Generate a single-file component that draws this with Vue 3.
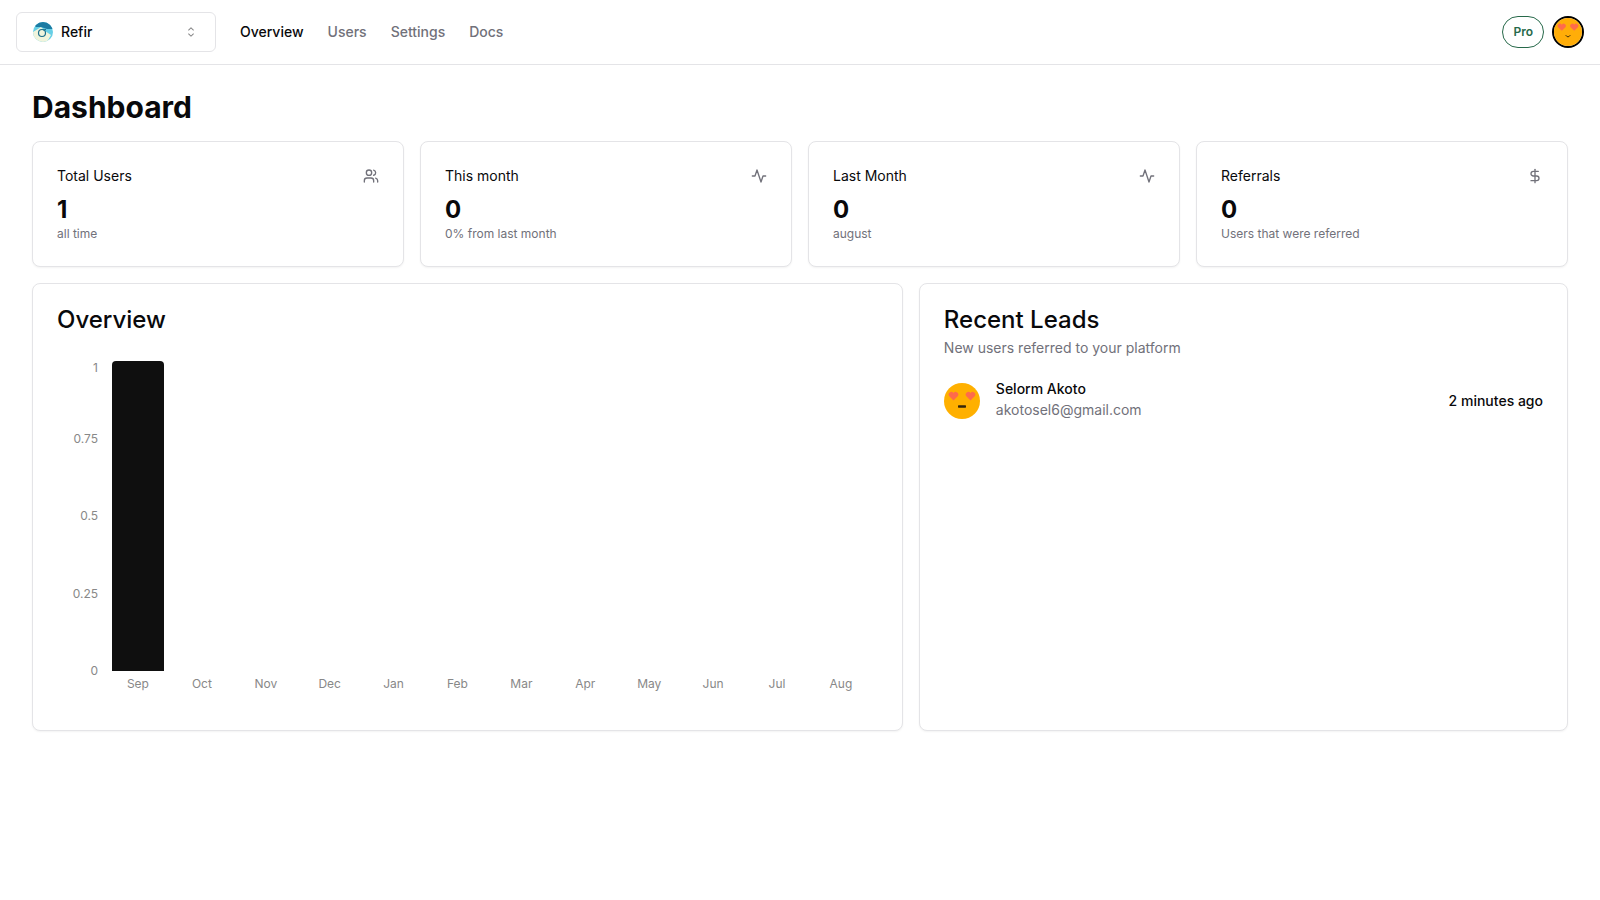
<script setup>
const links = [
  { label: 'Overview', active: true },
  { label: 'Users', active: false },
  { label: 'Settings', active: false },
  { label: 'Docs', active: false },
]

const stats = [
  { title: 'Total Users', value: '1', note: 'all time', icon: 'users' },
  { title: 'This month', value: '0', note: '0% from last month', icon: 'activity' },
  { title: 'Last Month', value: '0', note: 'august', icon: 'activity' },
  { title: 'Referrals', value: '0', note: 'Users that were referred', icon: 'dollar' },
]

const icons = {
  users: [
    'M16 21v-2a4 4 0 0 0-4-4H6a4 4 0 0 0-4 4v2',
    'M9 3a4 4 0 1 0 0 8a4 4 0 1 0 0-8',
    'M22 21v-2a4 4 0 0 0-3-3.87',
    'M16 3.13a4 4 0 0 1 0 7.75',
  ],
  activity: ['M22 12h-4l-3 9L9 3l-3 9H2'],
  dollar: ['M12 2v20', 'M17 5H9.5a3.5 3.5 0 0 0 0 7h5a3.5 3.5 0 0 1 0 7H6'],
}

const ticks = ['1', '0.75', '0.5', '0.25', '0']
const months = [
  { name: 'Sep', total: 1 },
  { name: 'Oct', total: 0 },
  { name: 'Nov', total: 0 },
  { name: 'Dec', total: 0 },
  { name: 'Jan', total: 0 },
  { name: 'Feb', total: 0 },
  { name: 'Mar', total: 0 },
  { name: 'Apr', total: 0 },
  { name: 'May', total: 0 },
  { name: 'Jun', total: 0 },
  { name: 'Jul', total: 0 },
  { name: 'Aug', total: 0 },
]
</script>

<template>
  <div class="page">
    <header class="topbar">
      <button class="switcher" type="button" aria-label="Select a project">
        <svg class="logo" viewBox="0 0 20 20" aria-hidden="true">
          <defs>
            <clipPath id="logo-clip"><circle cx="10" cy="10" r="10" /></clipPath>
          </defs>
          <g clip-path="url(#logo-clip)">
            <rect width="20" height="20" fill="#67cfe6" />
            <path d="M0 10L5 7L8 5L12 9L18 13L14 20H0Z" fill="#f0f4dc" />
            <path d="M2 4V0H20V7L14 7L8 5L3 5Z" fill="#1c7ba3" />
          </g>
          <circle cx="9" cy="11" r="3.5" fill="none" stroke="#1c6f8c" stroke-width="1.2" />
          <path d="M10 8L13 7.5" fill="none" stroke="#1c6f8c" />
        </svg>
        <span class="switcher-name">Refir</span>
        <svg class="caret" viewBox="0 0 15 15" aria-hidden="true">
          <path
            d="M4.93179 5.43179C4.75605 5.60753 4.75605 5.89245 4.93179 6.06819C5.10753 6.24392 5.39245 6.24392 5.56819 6.06819L7.49999 4.13638L9.43179 6.06819C9.60753 6.24392 9.89245 6.24392 10.0682 6.06819C10.2439 5.89245 10.2439 5.60753 10.0682 5.43179L7.81819 3.18179C7.73379 3.0974 7.61933 3.04999 7.49999 3.04999C7.38064 3.04999 7.26618 3.0974 7.18179 3.18179L4.93179 5.43179ZM10.0682 9.56819C10.2439 9.39245 10.2439 9.10753 10.0682 8.93179C9.89245 8.75606 9.60753 8.75606 9.43179 8.93179L7.49999 10.8636L5.56819 8.93179C5.39245 8.75606 5.10753 8.75606 4.93179 8.93179C4.75605 9.10753 4.75605 9.39245 4.93179 9.56819L7.18179 11.8182C7.35753 11.9939 7.64245 11.9939 7.81819 11.8182L10.0682 9.56819Z"
            fill="currentColor"
          />
        </svg>
      </button>
      <nav class="nav">
        <a v-for="l in links" :key="l.label" href="#" :class="{ active: l.active }">{{ l.label }}</a>
      </nav>
      <div class="account">
        <span class="plan">Pro</span>
        <button class="profile" type="button" aria-label="Account menu">
          <svg viewBox="0 0 36 36" aria-hidden="true">
            <rect width="36" height="36" fill="#ffad08" />
            <path d="M10 16.5L5 11.5A2.8 2.8 0 0 1 10 8.8A2.8 2.8 0 0 1 15 11.5Z" fill="#ff6b4a" />
            <path d="M26 16.5L21 11.5A2.8 2.8 0 0 1 26 8.8A2.8 2.8 0 0 1 31 11.5Z" fill="#ff6b4a" />
            <path d="M15 22Q18 26.5 21 22" fill="none" stroke="#3a2a08" stroke-width="1.2" />
          </svg>
        </button>
      </div>
    </header>

    <main class="content">
      <h1>Dashboard</h1>

      <section class="stats">
        <article v-for="s in stats" :key="s.title" class="card stat">
          <div class="stat-head">
            <h2>{{ s.title }}</h2>
            <svg class="icon" viewBox="0 0 24 24" aria-hidden="true">
              <path v-for="d in icons[s.icon]" :key="d" :d="d" />
            </svg>
          </div>
          <div class="value">{{ s.value }}</div>
          <p class="note">{{ s.note }}</p>
        </article>
      </section>

      <section class="panels">
        <article class="card overview">
          <h2 class="panel-title">Overview</h2>
          <div class="chart">
            <div class="y-axis">
              <span v-for="t in ticks" :key="t">{{ t }}</span>
            </div>
            <div class="plot">
              <div v-for="m in months" :key="m.name" class="band">
                <div class="bar" :style="{ height: m.total * 100 + '%' }"></div>
              </div>
            </div>
            <div class="x-axis">
              <span v-for="m in months" :key="m.name">{{ m.name }}</span>
            </div>
          </div>
        </article>

        <article class="card leads">
          <h2 class="panel-title">Recent Leads</h2>
          <p class="panel-note">New users referred to your platform</p>
          <div class="lead">
            <svg class="lead-avatar" viewBox="0 0 36 36" aria-hidden="true">
              <circle cx="18" cy="18" r="18" fill="#ffb000" />
              <path d="M9.5 17.4L5.3 13.2A2.5 2.5 0 0 1 9.5 10A2.5 2.5 0 0 1 13.7 13.2Z" fill="#ff6b4a" />
              <path d="M26.5 17.4L22.3 13.2A2.5 2.5 0 0 1 26.5 10A2.5 2.5 0 0 1 30.7 13.2Z" fill="#ff6b4a" />
              <rect x="14" y="22.3" width="8" height="2.4" rx="0.6" fill="#35260a" />
            </svg>
            <div class="lead-text">
              <p class="lead-name">Selorm Akoto</p>
              <p class="lead-mail">akotosel6@gmail.com</p>
            </div>
            <time class="lead-time">2 minutes ago</time>
          </div>
        </article>
      </section>
    </main>
  </div>
</template>

<style>
body {
  background: #fff;
}
</style>

<style scoped>
.page {
  font-family: Inter, "Liberation Sans", sans-serif;
  font-size: 14px;
  line-height: 20px;
  color: #09090b;
}
h1, h2, p {
  margin: 0;
}
button {
  font: inherit;
  color: inherit;
  cursor: pointer;
}
.topbar {
  display: flex;
  align-items: center;
  height: 64px;
  padding: 0 16px;
  border-bottom: 1px solid #e4e4e7;
}
.switcher {
  display: flex;
  align-items: center;
  gap: 8px;
  width: 200px;
  height: 40px;
  padding: 0 16px;
  background: #fff;
  border: 1px solid #e4e4e7;
  border-radius: 6px;
  font-weight: 500;
}
.logo {
  width: 20px;
  height: 20px;
}
.caret {
  width: 16px;
  height: 16px;
  margin-left: auto;
  opacity: 0.5;
}
.nav {
  display: flex;
  gap: 24px;
  margin-left: 24px;
  font-weight: 500;
}
.nav a {
  color: #71717a;
  text-decoration: none;
}
.nav a.active {
  color: #09090b;
}
.account {
  display: flex;
  align-items: center;
  gap: 8px;
  margin-left: auto;
}
.plan {
  padding: 7px 10px;
  border: 1px solid #27694a;
  border-radius: 16px;
  color: #27694a;
  font-size: 12px;
  line-height: 16px;
  font-weight: 600;
}
.profile {
  width: 32px;
  height: 32px;
  padding: 0;
  border: 2px solid #000;
  border-radius: 50%;
  overflow: hidden;
}
.profile svg {
  display: block;
  width: 100%;
  height: 100%;
}
.content {
  display: flex;
  flex-direction: column;
  gap: 16px;
  padding: 24px 32px 32px;
}
h1 {
  font-size: 30px;
  line-height: 36px;
  font-weight: 700;
}
.card {
  min-width: 0;
  border: 1px solid #e4e4e7;
  border-radius: 8px;
  padding: 24px;
  background: #fff;
  box-shadow: 0 1px 2px rgba(0, 0, 0, 0.05);
}
.stats {
  display: grid;
  grid-template-columns: repeat(4, 1fr);
  gap: 16px;
}
.stat-head {
  display: flex;
  align-items: center;
  justify-content: space-between;
  padding-bottom: 8px;
}
.stat-head h2 {
  font-size: 14px;
  line-height: 20px;
  font-weight: 400;
}
.icon {
  width: 16px;
  height: 16px;
  fill: none;
  stroke: #71717a;
  stroke-width: 2;
  stroke-linecap: round;
  stroke-linejoin: round;
}
.value {
  font-size: 24px;
  line-height: 32px;
  font-weight: 700;
}
.note {
  font-size: 12px;
  line-height: 16px;
  color: #71717a;
}
.panels {
  display: grid;
  grid-template-columns: repeat(7, 1fr);
  gap: 16px;
}
.overview {
  grid-column: span 4;
}
.leads {
  grid-column: span 3;
}
.panel-title {
  font-size: 24px;
  line-height: 24px;
  font-weight: 500;
}
.chart {
  display: grid;
  grid-template-columns: 44px 1fr;
  grid-template-rows: 310px 30px;
  margin-top: 24px;
  padding: 5px;
  font-size: 12px;
  line-height: 16px;
  color: #888;
}
.y-axis {
  display: flex;
  flex-direction: column;
  justify-content: space-between;
  margin: -8px 0;
  padding-right: 8px;
  text-align: right;
}
.y-axis span {
  height: 16px;
}
.y-axis span:first-child {
  box-sizing: border-box;
  padding-top: 7px;
}
.plot {
  display: flex;
}
.band {
  display: flex;
  flex: 1;
  align-items: flex-end;
  justify-content: center;
}
.bar {
  width: 80%;
  background: #0f0f0f;
  border-radius: 4px 4px 0 0;
}
.x-axis {
  grid-column: 2;
  display: flex;
  padding-top: 5px;
}
.x-axis span {
  flex: 1;
  text-align: center;
}
.panel-note {
  margin-top: 6px;
  color: #71717a;
}
.lead {
  display: flex;
  align-items: center;
  gap: 16px;
  margin-top: 24px;
}
.lead-avatar {
  width: 36px;
  height: 36px;
}
.lead-name {
  margin-bottom: 4px;
  line-height: 14px;
  font-weight: 500;
}
.lead-mail {
  color: #71717a;
}
.lead-time {
  margin-left: auto;
  font-weight: 500;
}
</style>
